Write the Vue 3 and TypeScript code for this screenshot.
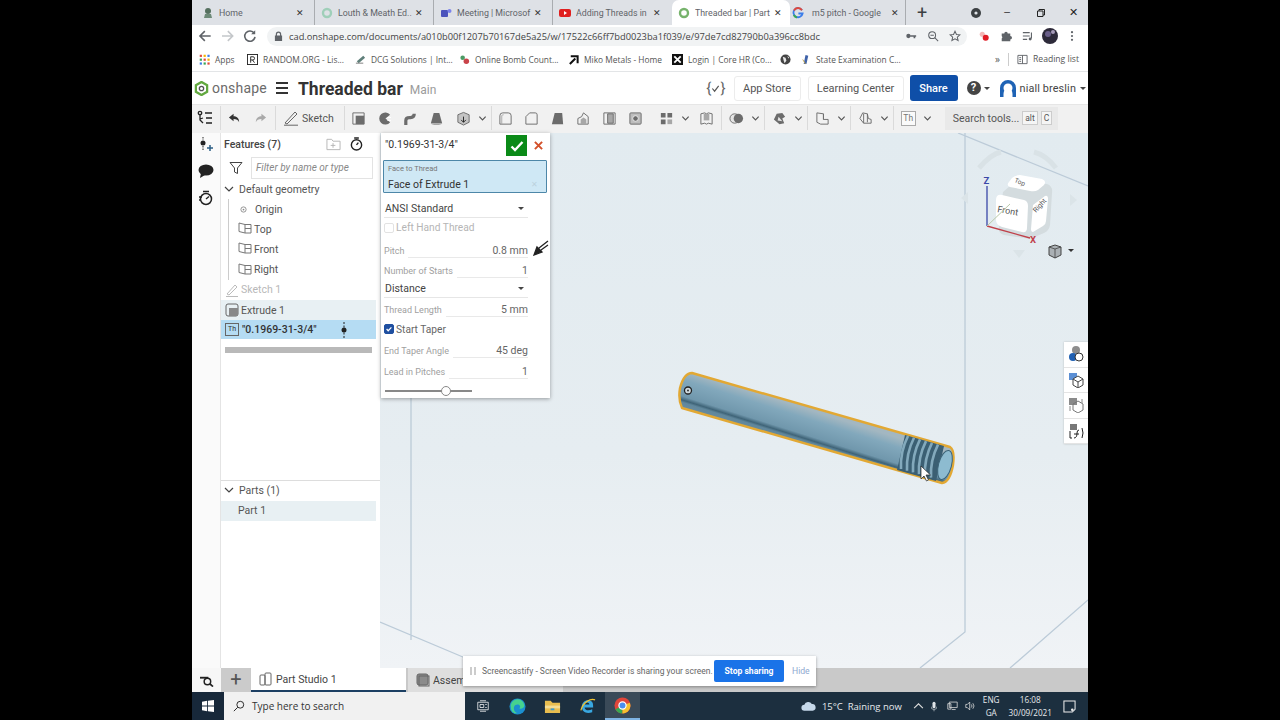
<template>
  <div class="screen">
    <div class="frame">
      <!-- chrome tabs -->
      <div class="tabstrip">
        <div v-for="t in tabs" :key="t.title" class="tab" :class="{ active: t.active, last: t.kind === 'g' }">
          <svg class="fav" viewBox="0 0 12 12">
            <circle v-if="t.kind === 'ring'" cx="6" cy="6" r="4" fill="none" :stroke="t.color" stroke-width="2.4" />
            <rect v-else-if="t.kind === 'yt'" x="0" y="2" width="12" height="8" rx="2" fill="#e01f1f" />
            <path v-if="t.kind === 'yt'" d="M5 4l3 2-3 2z" fill="#fff" />
            <template v-if="t.kind === 'home'">
              <circle cx="6" cy="4" r="3" fill="#55705f" />
              <path d="M3 7h6l1 4H2z" fill="#6d8a78" />
            </template>
            <template v-if="t.kind === 'teams'">
              <rect x="1" y="3" width="7" height="7" rx="1" fill="#4b53bc" />
              <circle cx="9.5" cy="4" r="2" fill="#7b83eb" />
            </template>
            <template v-if="t.kind === 'g'">
              <path d="M10 3.2A4.6 4.6 0 1 0 10.6 6.5H6.4" fill="none" stroke="#3b7dea" stroke-width="1.8" />
              <path d="M2 3.5A4.6 4.6 0 0 1 10 3.2" fill="none" stroke="#e0483c" stroke-width="1.8" />
              <path d="M1.7 8A4.6 4.6 0 0 0 5 10.5" fill="none" stroke="#3aa757" stroke-width="1.8" />
            </template>
          </svg>
          <span class="tab-title">{{ t.title }}</span>
          <span class="tab-x">✕</span>
        </div>
        <span class="tab-plus">+</span>
        <span class="win-area">
          <svg class="win-dot" viewBox="0 0 12 12"><circle cx="6" cy="6" r="5" fill="#3c4043" /><circle cx="6" cy="6" r="1.6" fill="#dee1e6" /></svg>
          <span class="win-btn">—</span>
          <svg class="win-res" viewBox="0 0 10 10"><path d="M1.500 3h5.500v5.500H1.500zM3 3V1.500h5.500V7H7" fill="none" stroke="#222" /></svg>
          <span class="win-close">✕</span>
        </span>
      </div>

      <!-- address bar -->
      <div class="addressbar">
        <svg class="nav" viewBox="0 0 14 14"><path d="M13 7H2M7 2L2 7l5 5" fill="none" stroke="#5f6368" stroke-width="1.6" /></svg>
        <svg class="nav" viewBox="0 0 14 14"><path d="M1 7h11M7 2l5 5-5 5" fill="none" stroke="#c4c7ca" stroke-width="1.600" /></svg>
        <svg class="nav" viewBox="0 0 14 14"><path d="M11.500 4.200A5.300 5.300 0 1 0 12.300 8" fill="none" stroke="#5f6368" stroke-width="1.600" /><path d="M12.500 1v4.200H8.300z" fill="#5f6368" /></svg>
        <div class="omnibox">
          <svg class="lock" viewBox="0 0 10 12"><path d="M2 5V3.500a3 3 0 0 1 6 0V5h1v6H1V5zm1.300 0h3.400V3.500a1.700 1.700 0 0 0-3.400 0z" fill="#5f6368" /></svg>
          <span class="url">cad.onshape.com/documents/a010b00f1207b70167de5a25/w/17522c66ff7bd0023ba1f039/e/97de7cd82790b0a396cc8bdc</span>
          <svg class="omni-ic" viewBox="0 0 14 14"><circle cx="4" cy="7" r="2.500" fill="#5f6368" /><path d="M6 6h7v2h-1v1.500h-2V8H6z" fill="#5f6368" /></svg>
          <svg class="omni-ic" viewBox="0 0 14 14"><circle cx="6" cy="6" r="4" fill="none" stroke="#5f6368" stroke-width="1.200" /><path d="M9 9l4 4M4 6h4" stroke="#5f6368" stroke-width="1.200" /></svg>
          <svg class="omni-ic" viewBox="0 0 14 14"><path d="M7 1.500l1.700 3.700 4 .4-3 2.700.9 4L7 10.300l-3.600 2 .9-4-3-2.700 4-.4z" fill="none" stroke="#5f6368" stroke-width="1.200" /></svg>
        </div>
        <div class="ext-icons">
          <svg class="ext" viewBox="0 0 14 14"><circle cx="5" cy="5" r="3" fill="#f3b6b6" /><circle cx="9" cy="9" r="3.500" fill="#e01b24" /></svg>
          <svg class="ext" viewBox="0 0 14 14"><path d="M2 4h3a2 2 0 0 1 4 0h3v3a2 2 0 0 1 0 4v2H2v-3a2 2 0 0 0 0-3z" fill="#5f6368" /></svg>
          <svg class="ext media" viewBox="0 0 14 14"><path d="M1 3h8M1 7h8M1 11h5" stroke="#5f6368" stroke-width="1.300" /><path d="M11 3v7" stroke="#5f6368" stroke-width="1.300" /><circle cx="9.500" cy="10.500" r="1.700" fill="#5f6368" /></svg>
          <svg class="ext big" viewBox="0 0 16 16"><circle cx="8" cy="8" r="8" fill="#2d2a3a" /><circle cx="6" cy="6" r="3" fill="#6a5f8a" /><circle cx="11" cy="4" r="2" fill="#a59ab8" /></svg>
          <svg class="ext" viewBox="0 0 14 14"><circle cx="7" cy="2.500" r="1.300" fill="#5f6368" /><circle cx="7" cy="7" r="1.300" fill="#5f6368" /><circle cx="7" cy="11.500" r="1.300" fill="#5f6368" /></svg>
        </div>
      </div>

      <!-- bookmarks -->
      <div class="bookmarks">
        <div v-for="b in bookmarks" :key="b.icon" class="bm" :style="{ width: b.width + 'px' }">
          <svg class="bm-ic" viewBox="0 0 12 12">
            <template v-if="b.icon === 'apps'">
              <rect v-for="c in appDots" :key="c.x + '-' + c.y" :x="c.x" :y="c.y" width="2.400" height="2.400" :fill="c.fill" />
            </template>
            <template v-if="b.icon === 'r'">
              <rect x=".5" y=".5" width="11" height="11" fill="#fff" stroke="#222" />
              <path d="M4 9.500V3h2.500a1.700 1.700 0 0 1 0 3.500H4M6 6.500l2.200 3" fill="none" stroke="#222" />
            </template>
            <template v-if="b.icon === 'dcg'">
              <path d="M2 8l7-6 2 2-7 6z" fill="#5f7f7a" /><path d="M1 10h8" stroke="#777" />
            </template>
            <template v-if="b.icon === 'bomb'">
              <circle cx="4" cy="4" r="2.500" fill="#4c9a64" /><circle cx="8" cy="8" r="3" fill="#c9434a" />
            </template>
            <path v-if="b.icon === 'arrow'" d="M2 11L8 5M3 2.500h7.500V10" fill="none" stroke="#111" stroke-width="2.200" />
            <template v-if="b.icon === 'x'">
              <rect width="12" height="12" fill="#111" /><path d="M2.500 2.500l7 7M9.500 2.500l-7 7" stroke="#fff" stroke-width="2" />
            </template>
            <template v-if="b.icon === 'state'">
              <path d="M6 1l3 1-2 9H4z" fill="#3f62a8" /><path d="M3 6l3 5" stroke="#c2a44a" />
            </template>
            <template v-if="b.icon === 'globe'">
              <circle cx="6" cy="6" r="5.500" fill="#444" /><path d="M3 3l3 1 1 3-2 3-1-3zM8 2l2 2-1 1z" fill="#e8e8e8" />
            </template>
          </svg>
          <span v-if="b.label">{{ b.label }}</span>
        </div>
        <div class="bm-end">
          <span class="bm-more">»</span>
          <span class="bm-sep"></span>
          <svg class="bm-ic" viewBox="0 0 12 12"><path d="M1 1.500h10v9H1zM6 1.500v9M2.500 4h2M2.500 6h2M2.500 8h2" fill="none" stroke="#5f6368" /></svg>
          <span>Reading list</span>
        </div>
      </div>

      <!-- onshape header -->
      <header class="appbar">
        <svg class="logo" viewBox="0 0 16 16">
          <path d="M8 1l6 3.500v7L8 15l-6-3.500v-7z" fill="none" stroke="#62a83f" stroke-width="2.400" />
          <circle cx="8" cy="8" r="2.300" fill="none" stroke="#555" stroke-width="1.400" />
        </svg>
        <span class="brand">onshape</span>
        <span class="burger"><i></i><i></i><i></i></span>
        <span class="doc-title">Threaded bar</span>
        <span class="doc-branch">Main</span>
        <span class="appbar-space"></span>
        <span class="braces">{<svg viewBox="0 0 10 10"><path d="M1.500 5l2.500 3 4.500-6" fill="none" stroke="#555" stroke-width="1.300" /></svg>}</span>
        <span class="hbtn store">App Store</span>
        <span class="hbtn center">Learning Center</span>
        <span class="share">Share</span>
        <span class="help">?</span>
        <span class="caret dark"></span>
        <svg class="avatar" viewBox="0 0 18 18">
          <path d="M1 18V9a8 8 0 0 1 16 0v9h-3.500v-3a4.500 6 0 0 0-9 0v3z" fill="#1f63b5" />
          <circle cx="9" cy="9" r="4.500" fill="#fff" />
        </svg>
        <span class="user">niall breslin</span>
        <span class="caret dark"></span>
      </header>

      <!-- feature toolbar -->
      <div class="toolbar">
        <svg class="list-ic" viewBox="0 0 16 16">
          <circle cx="3" cy="3" r="1.700" fill="none" stroke="#222" stroke-width="1.300" />
          <path d="M3 5v5l3 3M3 9l3-1M8 3h7M9 8h6M9 13h6" fill="none" stroke="#222" stroke-width="1.300" />
        </svg>
        <span class="tsep"></span>
        <svg class="undo" viewBox="0 0 14 14"><path d="M6 2L1 6l5 4V7.500c3 0 5 1 6 3.500 0-4-2-6.500-6-6.500z" fill="#333" /></svg>
        <svg class="undo" viewBox="0 0 14 14"><path d="M8 2l5 4-5 4V7.500c-3 0-5 1-6 3.500 0-4 2-6.500 6-6.500z" fill="#a9a9a9" /></svg>
        <span class="tsep"></span>
        <svg class="pen" viewBox="0 0 16 16"><path d="M2 13L12 2l2 2L4 14zM1 15.200h14" fill="none" stroke="#666" /></svg>
        <span class="sketch">Sketch</span>
        <span class="tsep"></span>
        <template v-for="(tool, i) in tools" :key="i">
          <span v-if="tool.sep" class="tsep"></span>
          <span v-else class="tool" :class="{ withchev: tool.chev, wide: tool.wide }">
            <span v-if="tool.th" class="th big">Th</span>
            <svg v-else class="tool-ic" viewBox="0 0 16 16">
              <path v-for="(p, j) in tool.paths" :key="j" :d="p.d" :fill="p.fill ?? 'none'" :stroke="p.stroke ?? 'none'" :stroke-width="p.sw ?? 1" />
            </svg>
            <svg v-if="tool.chev" class="chev" viewBox="0 0 10 10"><path d="M1.500 3L5 6.500 8.500 3" fill="none" stroke="#555" stroke-width="1.300" /></svg>
          </span>
        </template>
        <div class="tool-search">
          <span>Search tools...</span>
          <kbd>alt</kbd><kbd>C</kbd>
        </div>
      </div>

      <!-- main area -->
      <div class="workspace">
        <div class="rail">
          <svg class="rail-ic" viewBox="0 0 16 16"><circle cx="5" cy="7" r="2.500" fill="#222" /><path d="M5 1v3M5 10v4" stroke="#222" stroke-dasharray="1.500 1" /><path d="M9 12h6M12 9v6" stroke="#2d5f85" stroke-width="1.500" /></svg>
          <svg class="rail-ic" viewBox="0 0 16 16"><ellipse cx="8" cy="7" rx="7.500" ry="5.500" fill="#222" /><path d="M3 10l-1 5 5-3z" fill="#222" /></svg>
          <svg class="rail-ic" viewBox="0 0 16 16"><circle cx="8" cy="9" r="5.500" fill="none" stroke="#222" stroke-width="1.500" /><path d="M5 1.500h6M8 9l3-2.500M1 7h3M1 10h2" stroke="#222" stroke-width="1.400" /></svg>
        </div>

        <aside class="features">
          <div class="feat-head">
            <span>Features (7)</span>
            <span class="feat-head-ic">
              <svg viewBox="0 0 16 14"><path d="M1 2h5l1.500 2H15v9H1zM5 8.500h5M7.500 6v5" fill="none" stroke="#b5b5b5" /></svg>
              <svg viewBox="0 0 14 15"><circle cx="7" cy="8.500" r="5.500" fill="none" stroke="#222" stroke-width="1.500" /><path d="M4.500 1h5M7 8.500l2-2.500" stroke="#222" stroke-width="1.500" /></svg>
            </span>
          </div>
          <div class="filter-row">
            <svg viewBox="0 0 14 14"><path d="M1 1.500h12L8.500 7v5.500l-3-1.500V7z" fill="none" stroke="#444" /></svg>
            <span class="filter">Filter by name or type</span>
          </div>
          <div class="tree">
            <div class="group-row"><svg class="tw" viewBox="0 0 10 10"><path d="M1 3l4 4 4-4" fill="none" stroke="#444" stroke-width="1.200" /></svg>Default geometry</div>
            <div class="branch">
              <div class="row indent origin"><svg viewBox="0 0 8 8"><circle cx="4" cy="4" r="3" fill="none" stroke="#888" /><circle cx="4" cy="4" r="1" fill="#888" /></svg>Origin</div>
              <div v-for="p in planes" :key="p" class="row indent">
                <svg class="plane" viewBox="0 0 14 14"><path d="M1 1l6 1.500h6V11H7l-6-1.500zM7 2.500V11M7 6.500h6" fill="none" stroke="#777" /></svg>{{ p }}
              </div>
            </div>
            <div class="row feat muted"><svg class="plane" viewBox="0 0 14 14"><path d="M2 11l8-9 2 2-8 8zM1 13.500h12" fill="none" stroke="#bbb" /></svg>Sketch 1</div>
            <div class="row feat tinted"><svg class="plane" viewBox="0 0 14 14"><rect x="1" y="1" width="12" height="12" rx="2" fill="none" stroke="#666" /><rect x="4" y="5" width="9" height="8" fill="#888" /></svg>Extrude 1</div>
            <div class="row feat selected">
              <span class="th">Th</span><b>"0.1969-31-3/4"</b>
              <svg class="rollback" viewBox="0 0 6 16"><circle cx="3" cy="8" r="2.500" fill="#222" /><path d="M3 0v16" stroke="#222" stroke-dasharray="2 1.500" /></svg>
            </div>
            <div class="rollbar"></div>
          </div>
          <div class="parts">
            <div class="group-row"><svg class="tw" viewBox="0 0 10 10"><path d="M1 3l4 4 4-4" fill="none" stroke="#444" stroke-width="1.200" /></svg>Parts (1)</div>
            <div class="part">Part 1</div>
          </div>
        </aside>

        <div class="viewport">
          <svg class="scene" viewBox="380 133 708 535" preserveAspectRatio="none">
            <defs>
              <linearGradient id="barfill" gradientUnits="userSpaceOnUse" x1="692" y1="373" x2="681" y2="408">
                <stop offset="0" stop-color="#a3b7c1" />
                <stop offset=".25" stop-color="#82a8bc" />
                <stop offset=".68" stop-color="#7097ac" />
                <stop offset=".78" stop-color="#3f6478" />
                <stop offset=".84" stop-color="#60879c" />
                <stop offset="1" stop-color="#6a8ca0" />
              </linearGradient>
            </defs>
            <path d="M411 133V640M380 622L470 660M965 133V632L920 668M958 133L1088 186M1088 600L1010 668" fill="none" stroke="#bccbd8" stroke-width="1.300" />
            <path d="M692 373L950 447Q955 450 953 465Q950 482 942 483L682 408Q678 400 680 388Q684 373 692 373z" fill="url(#barfill)" stroke="#e2a833" stroke-width="2.400" stroke-linejoin="round" />
            <path d="M905 435L944 446L936 481L897 470z" fill="#3b5f73" />
            <g fill="none" stroke="#83a9bc" stroke-width="2.600">
              <path v-for="x in threadXs" :key="x" :d="`M${x} ${436 + (x - 908) * 0.287}q-8 16 -7 33`" />
            </g>
            <ellipse cx="945" cy="465" rx="6.500" ry="15" transform="rotate(15 945 465)" fill="#8dbbd0" stroke="#3d6478" />
            <circle cx="688" cy="390.500" r="3.500" fill="#cfdbe0" stroke="#222" stroke-width="1.300" />
            <circle cx="688" cy="390.500" r=".9" fill="#222" />
            <path d="M921 466v13l3-3 2.500 5 2-1-2.500-5h4.500z" fill="#fff" stroke="#222" stroke-width=".7" />

            <!-- view cube -->
            <path d="M979 168q12-14 22-16M1034 152q12 3 22 16" fill="none" stroke="#d9e2e6" stroke-width="5" />
            <path d="M1013 250h12l-6 8zM1070 194l7 6-7 6zM968 192l-7 6 7 6z" fill="#dbe4e8" />
            <path d="M1003 192l14-12 30 4q6 2 5 9l-2 32q-1 6-6 8l-14 6-26-4q-6-2-5-8z" fill="#d4dcdf" />
            <path d="M1012 178q3-3 8-3l22 4q5 2 2 6l-6 5q-3 2-8 1l-20-4q-4-2-1-5z" fill="#fff" />
            <path d="M996 200q0-6 6-5l22 5q4 1 4 6l-1 22q0 5-5 4l-20-5q-6-2-6-7z" fill="#fff" />
            <path d="M1033 205l12-9q3-1 3 3l-2 22q0 3-3 5l-10 6q-2 0-2-3z" fill="#fff" />
            <text class="cube-t" x="997" y="212" font-size="9" transform="rotate(10 997 212)">Front</text>
            <text class="cube-t" x="1014" y="182" font-size="6.500" transform="rotate(22 1014 182)">Top</text>
            <text class="cube-t" x="1036" y="213" font-size="7" transform="rotate(-48 1036 213)">Right</text>
            <path d="M987 186V226" stroke="#3a47a8" stroke-width="1.300" />
            <path d="M987 226L1030 238" stroke="#c0404a" stroke-width="1.300" />
            <path d="M987 226L1010 204" stroke="#b9c9a8" stroke-width="1" />
            <text class="axis z" x="983.500" y="184" font-size="9.500">Z</text>
            <text class="axis x" x="1030" y="243" font-size="9.500">X</text>
          </svg>

          <!-- thread dialog -->
          <div class="dialog">
            <div class="dlg-title">
              <span class="dlg-name">"0.1969-31-3/4"</span>
              <span class="ok"><svg viewBox="0 0 14 12"><path d="M1.500 6.500L5 10l7.500-8" fill="none" stroke="#fff" stroke-width="2.400" /></svg></span>
              <span class="cancel"><svg viewBox="0 0 10 10"><path d="M1 1l8 8M9 1l-8 8" fill="none" stroke="#d3502a" stroke-width="2.200" /></svg></span>
            </div>
            <div class="facebox">
              <small>Face to Thread</small>
              <span>Face of Extrude 1</span>
              <em>✕</em>
            </div>
            <div class="dlg-rows">
              <div class="drop">ANSI Standard<i class="caret dark"></i></div>
              <label class="chk off"><span class="box"></span>Left Hand Thread</label>
              <div class="num pitch"><span>Pitch</span><b>0.8 mm</b><svg class="wand" viewBox="0 0 16 16"><path d="M1 15L4 7l5 5zM6 8l9-7M8 10l7-5" fill="#222" stroke="#222" stroke-width="1.300" /></svg></div>
              <div class="num"><span>Number of Starts</span><b>1</b></div>
              <div class="drop">Distance<i class="caret dark"></i></div>
              <div class="num"><span>Thread Length</span><b>5 mm</b></div>
              <label class="chk on"><span class="box"><svg viewBox="0 0 10 10"><path d="M2 5l2 2.200L8 3" fill="none" stroke="#fff" stroke-width="1.500" /></svg></span>Start Taper</label>
              <div class="num"><span>End Taper Angle</span><b>45 deg</b></div>
              <div class="num"><span>Lead in Pitches</span><b>1</b></div>
              <div class="slider"><i></i></div>
            </div>
          </div>

          <svg class="cube-menu" viewBox="0 0 30 16">
            <path d="M3 4l6-2 6 2v8l-6 3-6-3z" fill="#aab0b4" stroke="#444" />
            <path d="M3 4l6 2 6-2M9 6v9" fill="none" stroke="#444" stroke-width=".8" />
            <path d="M22 6h6l-3 3z" fill="#333" />
          </svg>

          <div class="palette">
            <span v-for="(q, i) in paletteIcons" :key="i" class="pal-btn">
              <svg viewBox="0 0 16 16">
                <path v-for="(p, j) in q" :key="j" :d="p.d" :fill="p.fill ?? 'none'" :stroke="p.stroke ?? 'none'" />
              </svg>
            </span>
          </div>

          <div class="toast">
            <span class="pause"><i></i><i></i></span>
            <span class="toast-text">Screencastify - Screen Video Recorder is sharing your screen.</span>
            <span class="stop">Stop sharing</span>
            <span class="hide">Hide</span>
          </div>
        </div>
      </div>

      <!-- document tabs -->
      <div class="doctabs">
        <span class="search-doc"><svg viewBox="0 0 16 14"><path d="M1 3h9v2H1z" fill="#222" /><circle cx="9" cy="8" r="3.500" fill="none" stroke="#222" stroke-width="1.600" /><path d="M11.500 10.500L15 13.500" stroke="#222" stroke-width="1.800" /></svg></span>
        <span class="add-doc">+</span>
        <span class="doc-tab active">
          <svg viewBox="0 0 14 14"><rect x="1" y="3" width="5" height="10" rx="1" fill="none" stroke="#666" /><rect x="6" y="1" width="6" height="12" rx="1" fill="none" stroke="#666" /></svg>
          Part Studio 1
        </span>
        <span class="doc-tab">
          <svg viewBox="0 0 14 14"><rect x="1" y="1" width="11" height="11" rx="2" fill="#8b8b8b" stroke="#666" /><rect x="3" y="3" width="10" height="10" fill="none" stroke="#666" /></svg>
          Assembly 1
        </span>
      </div>

      <!-- windows taskbar -->
      <footer class="taskbar">
        <span class="start">
          <svg viewBox="0 0 14 14"><path d="M0 2l6-1v5.500H0zM7 .8L14 0v6.500H7zM0 7.500h6V13l-6-1zM7 7.500h7V14l-7-1z" fill="#fff" /></svg>
        </span>
        <div class="task-search">
          <svg viewBox="0 0 14 14"><circle cx="8.500" cy="5.500" r="4" fill="none" stroke="#222" stroke-width="1.100" /><path d="M5.500 8.500L1 13" stroke="#222" stroke-width="1.100" /></svg>
          <span>Type here to search</span>
        </div>
        <div class="task-apps">
          <span class="app"><svg viewBox="0 0 16 16"><path d="M1 3h14v10H1zM4 1h8M4 15h8M4 6h5v4H4zM11 6h2M11 10h2" fill="none" stroke="#fff" /></svg></span>
          <span class="app"><svg viewBox="0 0 18 18"><circle cx="9" cy="9" r="8.500" fill="#1b8fd0" /><path d="M2 10a7 7 0 0 1 14-3c1 3-2 5-5 4 2-2 0-4-2-4-3 0-5 3-3 7 1 1 2 2 3 2-4 1-7-2-7-6z" fill="#46d28e" /></svg></span>
          <span class="app"><svg viewBox="0 0 18 16"><path d="M1 2h6l2 2h8v11H1z" fill="#e8bd4f" /><path d="M1 7h16v3H1z" fill="#f4dc93" /><path d="M7 10h4v2H7z" fill="#3f9bc9" /></svg></span>
          <span class="app"><svg viewBox="0 0 18 18"><path d="M15 10H6c0 3 4 4 8 2v3c-6 2-11 0-11-6 0-5 5-8 9-6 3 1 3 4 3 7zM6 7h5c0-3-5-3-5 0z" fill="#39a7e0" /><path d="M2 13C4 5 12 0 17 2" fill="none" stroke="#f0c332" stroke-width="1.300" /></svg></span>
          <span class="app current"><svg viewBox="0 0 18 18"><circle cx="9" cy="9" r="8.500" fill="#e0463a" /><path d="M9 9L1.500 13A8.500 8.500 0 0 0 9 17.500z" fill="#37a852" /><path d="M9 9l7.800-3A8.500 8.500 0 0 1 9 17.500z" fill="#f5c02f" /><circle cx="9" cy="9" r="3.800" fill="#4a8df0" stroke="#fff" stroke-width="1.300" /></svg></span>
        </div>
        <div class="tray">
          <svg class="cloud" viewBox="0 0 18 12"><path d="M4 11a3.500 3.500 0 0 1 0-7 5 5 0 0 1 9-1 4 4 0 0 1 1 8z" fill="#c5d8ea" /></svg>
          <span class="weather">15°C&nbsp; Raining now</span>
          <svg class="tray-ic up" viewBox="0 0 10 6"><path d="M1 5l4-4 4 4" fill="none" stroke="#ddd" /></svg>
          <svg class="tray-ic mic" viewBox="0 0 10 16"><rect x="2.500" y="0" width="5" height="11" rx="2.500" fill="#dfe4e8" /><path d="M0 8a5 5 0 0 0 10 0M5 13v3" fill="none" stroke="#dfe4e8" /></svg>
          <svg class="tray-ic" viewBox="0 0 14 12"><path d="M3 1h10v7H3zM1 3h4v7H1zM6 10.500h5" fill="none" stroke="#ddd" /></svg>
          <svg class="tray-ic" viewBox="0 0 14 12"><path d="M1 4h2l3-3v10L3 8H1zM8 4q2 2 0 4M10 2.500q3 3.500 0 7" fill="none" stroke="#ddd" /></svg>
          <span class="lang">ENG<br />GA</span>
          <span class="clock">16:08<br />30/09/2021</span>
          <svg class="notif" viewBox="0 0 14 14"><path d="M1 1h12v9l-3 3H1z" fill="none" stroke="#eee" stroke-width="1.100" /><circle cx="10" cy="10.500" r="1.400" fill="#eee" /></svg>
        </div>
      </footer>
    </div>
  </div>
</template>

<script setup lang="ts">
interface Tab {
  title: string
  kind: string
  color?: string
  active?: boolean
}
interface Bookmark {
  label: string
  icon: string
  width: number
}
interface Shape {
  d: string
  fill?: string
  stroke?: string
  sw?: number
}
interface Tool {
  sep?: boolean
  chev?: boolean
  wide?: boolean
  th?: boolean
  paths?: Shape[]
}

const tabs: Tab[] = [
  { title: 'Home', kind: 'home' },
  { title: 'Louth & Meath Ed..', kind: 'ring', color: '#9fcfb9' },
  { title: 'Meeting | Microsof', kind: 'teams' },
  { title: 'Adding Threads in', kind: 'yt' },
  { title: 'Threaded bar | Part', kind: 'ring', color: '#77b36c', active: true },
  { title: 'm5 pitch - Google', kind: 'g' },
]

const bookmarks: Bookmark[] = [
  { label: 'Apps', icon: 'apps', width: 48 },
  { label: 'RANDOM.ORG - Lis...', icon: 'r', width: 108 },
  { label: 'DCG Solutions | Int...', icon: 'dcg', width: 104 },
  { label: 'Online Bomb Count...', icon: 'bomb', width: 109 },
  { label: 'Miko Metals - Home', icon: 'arrow', width: 104 },
  { label: 'Login | Core HR (Co...', icon: 'x', width: 108 },
  { label: '', icon: 'globe', width: 20 },
  { label: 'State Examination C...', icon: 'state', width: 110 },
]

const appColors = ['#e0483c', '#f5b400', '#3b7dea', '#3aa757', '#e0483c', '#f5b400', '#3b7dea', '#3aa757', '#e0483c']
const appDots = appColors.map((fill, i) => ({
  fill,
  x: (i % 3) * 4.2 + 0.8,
  y: Math.floor(i / 3) * 4.2 + 0.8,
}))

const planes = ['Top', 'Front', 'Right']
const threadXs = [908, 914, 920, 926, 932, 938]

const grey = '#6c6c6c'
const lite = '#a7a7a7'
const tools: Tool[] = [
  { paths: [{ d: 'M2 2h12v12H2z', stroke: grey }, { d: 'M5 5h9v9H5z', fill: grey }] },
  { paths: [{ d: 'M14 4a6.500 6.500 0 1 0 0 8L9 8z', fill: grey }, { d: 'M11 7h4M11 10h4', stroke: '#fff' }] },
  { paths: [{ d: 'M3 15V10q0-3 4-3h1q4 0 4-4', stroke: grey, sw: 3.4 }] },
  { paths: [{ d: 'M5 2h6l3 11H2z', fill: grey }, { d: 'M2 13a6 2 0 0 0 12 0', fill: lite }] },
  { chev: true, paths: [{ d: 'M2 4l6-2.500L14 4v8l-6 3-6-3z', fill: '#c4c4c4', stroke: grey }, { d: 'M8 6v6M5.500 9.500L8 12l2.500-2.500', stroke: '#222' }] },
  { sep: true },
  { paths: [{ d: 'M2 14V5q0-3 3-3h6q3 0 3 3v9z', stroke: grey }, { d: 'M4 14V5q0-1 2-1', stroke: lite }] },
  { paths: [{ d: 'M2 14V6l4-4h6q2 0 2 2v10z', stroke: grey }] },
  { paths: [{ d: 'M2 14L5 2h8l1 12z', fill: grey }] },
  { paths: [{ d: 'M2 14V8l4-2 2-4 5 4v8z', stroke: grey }, { d: 'M5 14V9l3-2 3 2v5z', fill: lite }] },
  { paths: [{ d: 'M2 2h12v12H2z', stroke: grey }, { d: 'M6 3h6v10H6z', fill: lite, stroke: grey }] },
  { paths: [{ d: 'M2 3q0-1 1-1h10q1 0 1 1v10q0 1-1 1H3q-1 0-1-1z', fill: '#bdbdbd', stroke: grey }, { d: 'M11 8a3 3 0 1 1-6 0 3 3 0 0 1 6 0z', fill: grey, stroke: '#eee' }] },
  { chev: true, wide: true, paths: [{ d: 'M2 2h5v5H2zM9 2h5v5H9zM2 9h5v5H2z', fill: grey }, { d: 'M9 9h5v5H9z', fill: lite }] },
  { paths: [{ d: 'M2 3l4-1 2 1 2-1 4 1v11l-4-1-2 1-2-1-4 1z', stroke: grey }, { d: 'M5 3h6v7H5z', fill: lite }] },
  { sep: true },
  { chev: true, paths: [{ d: 'M11 8a5 5 0 1 1-10 0 5 5 0 0 1 10 0z', fill: '#e4e4e4', stroke: grey }, { d: 'M15 8a5 5 0 1 1-10 0 5 5 0 0 1 10 0z', fill: grey }] },
  { sep: true },
  { chev: true, paths: [{ d: 'M2 9l3-6 6-1 3 4-3 2 2 5-5 1z', fill: grey }, { d: 'M7 6l4 5-5-1z', fill: '#e5e5e5' }] },
  { sep: true },
  { chev: true, paths: [{ d: 'M2 2l7 1v6h5v5H6L2 12z', stroke: grey }, { d: 'M9 3v6', stroke: grey }] },
  { sep: true },
  { chev: true, paths: [{ d: 'M2 8l3-6 5 1 1 5 3 1v4H6z', stroke: grey }, { d: 'M6 3v10M10 3v9', stroke: grey }] },
  { sep: true },
  { chev: true, th: true },
]

const paletteIcons: Shape[][] = [
  [
    { d: 'M4 4a4 4 0 0 1 8 0 4 4 0 0 1-8 0z', fill: '#8d8d8d' },
    { d: 'M1 11a4 4 0 0 1 8 0 4 4 0 0 1-8 0z', fill: '#1f5fb2' },
    { d: 'M7 11a4 4 0 0 1 8 0 4 4 0 0 1-8 0z', fill: '#fff', stroke: '#333' },
  ],
  [
    { d: 'M1 1h8v7H1z', fill: '#5b8fd4' },
    { d: 'M5 7l5-3 5 3v6l-5 3-5-3z', fill: '#fff', stroke: '#444' },
    { d: 'M5 7l5 3 5-3M10 10v6', stroke: '#444' },
  ],
  [
    { d: 'M1 1h8v7H1z', fill: '#8a8a8a' },
    { d: 'M5 7l5-3 5 3v6l-5 3-5-3z', stroke: '#777' },
    { d: 'M2 9v5M14 2v4', stroke: '#888' },
  ],
  [
    { d: 'M2 1h7v6H2z', fill: '#777' },
    { d: 'M2 8v7h2M14 5q2 5 0 10', stroke: '#222' },
    { d: 'M6 15q3 0 3-5 0-3 2-3M6 11h5', stroke: '#222' },
  ],
]
</script>

<style>
html,
body {
  margin: 0;
  background: #000;
}
</style>

<style scoped>
.screen {
  width: 1280px;
  height: 720px;
  background: #000;
  display: flex;
  justify-content: center;
  overflow: hidden;
}

.frame {
  width: 896px;
  height: 720px;
  display: flex;
  flex-direction: column;
  background: #fff;
  font-family: Roboto, "Liberation Sans", sans-serif;
  color: #333;
}

/* chrome */
.tabstrip {
  height: 25px;
  background: #dee1e6;
  display: flex;
  align-items: center;
  padding-left: 4px;
  font-family: Roboto, "Liberation Sans", sans-serif;
  font-size: 8.8px;
  color: #5f6368;
  flex: none;
}

.tab {
  width: 119px;
  height: 25px;
  box-sizing: border-box;
  display: flex;
  align-items: center;
  padding: 0 6px 0 6px;
  border-right: 1px solid #a9acb0;
  flex: none;
}

.tab:nth-child(4),
.tab.active {
  border-right-color: transparent;
}

.tab.active {
  background: #fff;
  border-radius: 7px 7px 0 0;
  width: 118px;
  padding-right: 4px;
  margin-right: 1px;
  border-right: 0;
}

.tab.last {
  width: 115px;
  padding: 0 2px 0 1px;
}

.fav {
  width: 12px;
  height: 12px;
  margin-right: 5px;
  flex: none;
}

.tab.last .fav {
  margin-right: 8px;
}

.tab-title {
  flex: 1;
  min-width: 0;
  white-space: nowrap;
  overflow: hidden;
}

.tab-x {
  font-size: 9px;
  color: #333;
  margin: 0 4px 0 2px;
}

.tab-plus {
  font-size: 18px;
  line-height: 20px;
  color: #3c4043;
  margin-left: 11px;
}

.win-area {
  margin-left: auto;
  display: flex;
  align-items: center;
  padding-right: 10px;
  color: #222;
}

.win-dot {
  width: 12px;
  height: 12px;
  margin-right: 15px;
}

.win-btn {
  font-size: 9px;
  width: 20px;
  text-align: center;
  margin-right: 19px;
}

.win-res {
  width: 10px;
  height: 10px;
  margin-right: 23px;
}

.win-close {
  font-size: 11px;
}

.addressbar {
  height: 22px;
  flex: none;
  background: #fff;
  display: flex;
  align-items: center;
  padding-left: 6px;
}

.nav {
  width: 14px;
  height: 14px;
  margin-right: 9px;
}

.omnibox {
  width: 700px;
  height: 19px;
  margin-left: 1px;
  border-radius: 10px;
  background: #f1f3f4;
  display: flex;
  align-items: center;
  padding-left: 7px;
  box-sizing: border-box;
  flex: none;
}

.lock {
  width: 9px;
  height: 11px;
  margin-right: 6px;
  flex: none;
}

.url {
  font-family: "Open Sans", "Liberation Sans", sans-serif;
  font-size: 9.300px;
  color: #444;
  width: 606px;
  white-space: nowrap;
  overflow: hidden;
}

.omni-ic {
  width: 12px;
  height: 12px;
  margin-left: 10px;
  flex: none;
}

.ext-icons {
  display: flex;
  align-items: center;
  margin-left: 11px;
}

.ext {
  width: 12px;
  height: 12px;
  margin-right: 10px;
}

.ext.media {
  margin-right: 8px;
}

.ext.big {
  width: 16px;
  height: 16px;
  margin-right: 8px;
}

.bookmarks {
  height: 25px;
  flex: none;
  background: #fff;
  border-bottom: 1px solid #e3e5e7;
  box-sizing: border-box;
  display: flex;
  align-items: center;
  padding-left: 7px;
  font-family: "Open Sans", "Liberation Sans", sans-serif;
  font-size: 8.400px;
  color: #555;
}

.bm {
  display: flex;
  align-items: center;
  white-space: nowrap;
  flex: none;
}

.bm-ic {
  width: 11px;
  height: 11px;
  margin-right: 5px;
  flex: none;
}

.bm-end {
  margin-left: auto;
  display: flex;
  align-items: center;
  padding-right: 9px;
  font-size: 8.600px;
}

.bm-more {
  margin-right: 8px;
  font-size: 10px;
}

.bm-sep {
  width: 1px;
  height: 13px;
  background: #ccc;
  margin-right: 8px;
}

/* onshape header */
.appbar {
  height: 32px;
  flex: none;
  display: flex;
  align-items: center;
  padding: 0 2px;
  background: #fff;
}

.logo {
  width: 15px;
  height: 15px;
  margin-right: 3px;
}

.brand {
  font-size: 14px;
  color: #6b6b6b;
  letter-spacing: .2px;
  width: 64px;
}

.burger {
  width: 12px;
  display: flex;
  flex-direction: column;
  gap: 3px;
  margin-right: 10px;
}

.burger i {
  height: 2px;
  background: #333;
}

.doc-title {
  font-size: 17.500px;
  font-weight: 700;
  color: #333;
  margin: 1px 7px 0 0;
}

.doc-branch {
  font-size: 12px;
  color: #9b9b9b;
  margin-top: 3px;
}

.appbar-space {
  flex: 1;
}

.braces {
  font-size: 15px;
  color: #666;
  display: flex;
  align-items: center;
  margin-right: 8px;
}

.braces svg {
  width: 9px;
  height: 9px;
}

.hbtn {
  height: 25px;
  box-sizing: border-box;
  border: 1px solid #ececec;
  border-radius: 3px;
  display: flex;
  align-items: center;
  justify-content: center;
  font-size: 11px;
  color: #555;
}

.store {
  width: 67px;
  margin-right: 7px;
}

.center {
  width: 96px;
  margin-right: 6px;
}

.share {
  width: 48px;
  height: 26px;
  background: #0f4fa8;
  color: #fff;
  border-radius: 3px;
  font-size: 11px;
  font-weight: 500;
  display: flex;
  align-items: center;
  justify-content: center;
  margin-right: 9px;
}

.help {
  width: 14px;
  height: 14px;
  border-radius: 50%;
  background: #444;
  color: #fff;
  font-size: 11px;
  font-weight: 700;
  text-align: center;
  line-height: 14px;
  margin-right: 3px;
}

.caret {
  display: inline-block;
  width: 0;
  height: 0;
  border: 3px solid transparent;
  border-bottom: 0;
  border-top: 3px solid #444;
}

.appbar > .caret {
  margin-right: 9px;
}

.appbar > .caret:last-child {
  margin: 0 0 0 4px;
}

.avatar {
  width: 18px;
  height: 18px;
  margin-right: 3px;
}

.user {
  font-size: 10.800px;
  color: #444;
  letter-spacing: .15px;
}

/* toolbar */
.toolbar {
  height: 29px;
  flex: none;
  background: #f1f1f1;
  border-top: 1px solid #e6e6e6;
  box-sizing: border-box;
  display: flex;
  align-items: center;
  padding: 0 0 2px 5px;
}

.list-ic {
  width: 16px;
  height: 16px;
  margin-right: 6px;
}

.tsep {
  width: 1px;
  height: 24px;
  margin: 0 1px;
  background: #dadada;
  flex: none;
}

.undo {
  width: 13px;
  height: 13px;
  margin-left: 6px;
  margin-right: 6px;
}

.undo + .undo {
  margin-left: 7px;
  margin-right: 7px;
}

.pen {
  width: 16px;
  height: 16px;
  margin: 0 3px 0 6px;
}

.sketch {
  font-size: 10.500px;
  color: #555;
  margin-right: 9px;
}

.tool {
  width: 26px;
  flex: none;
  display: flex;
  align-items: center;
  justify-content: center;
}

.tool.withchev {
  width: 40px;
  justify-content: flex-start;
  padding-left: 6px;
  box-sizing: border-box;
}

.tool.wide {
  width: 45px;
  padding-left: 10px;
}

.tool-ic {
  width: 15px;
  height: 15px;
  flex: none;
}

.chev {
  width: 9px;
  height: 9px;
  margin-left: 7.500px;
  flex: none;
}

.tool-search {
  margin-left: 10px;
  width: 113px;
  height: 23px;
  background: #e9e9e9;
  display: flex;
  align-items: center;
  padding-left: 8px;
  box-sizing: border-box;
  font-size: 10.500px;
  color: #555;
}

.tool-search kbd {
  font-family: inherit;
  font-size: 8.500px;
  border: 1px solid #ccc;
  background: #f5f5f5;
  padding: 0 2px;
  margin-left: 3px;
  line-height: 12px;
}

/* workspace */
.workspace {
  flex: 1;
  display: flex;
  min-height: 0;
  background: #e6edf1;
}

.rail {
  width: 28px;
  flex: none;
  background: #fafafa;
  display: flex;
  flex-direction: column;
  align-items: center;
  padding-top: 3px;
  gap: 11px;
}

.rail-ic {
  width: 16px;
  height: 16px;
}

.features {
  width: 160px;
  flex: none;
  background: #fff;
  border-left: 1px solid #e4e4e4;
  box-sizing: border-box;
  display: flex;
  flex-direction: column;
  font-size: 10.500px;
  color: #555;
}

.feat-head {
  height: 22px;
  display: flex;
  align-items: center;
  padding-left: 3px;
  font-size: 10.500px;
  font-weight: 500;
  color: #444;
}

.feat-head-ic {
  margin-left: auto;
  display: flex;
  align-items: center;
  padding-right: 16px;
  gap: 8px;
}

.feat-head-ic svg {
  width: 15px;
  height: 14px;
}

.filter-row {
  height: 24px;
  margin-top: 1px;
  display: flex;
  align-items: center;
  padding-left: 8px;
}

.filter-row svg {
  width: 14px;
  height: 14px;
  margin-right: 8px;
}

.filter {
  width: 122px;
  height: 22px;
  box-sizing: border-box;
  border: 1px solid #e3e3e3;
  line-height: 20px;
  padding-left: 4px;
  font-style: italic;
  color: #888;
  font-size: 10px;
  white-space: nowrap;
}

.tree {
  flex: 1;
}

.group-row {
  height: 18px;
  display: flex;
  align-items: center;
  padding-left: 3px;
}

.tw {
  width: 10px;
  height: 10px;
  margin-right: 5px;
}

.branch {
  margin: 1px 0 0 7px;
  border-left: 1px solid #ccc;
}

.row {
  height: 20.200px;
  display: flex;
  align-items: center;
  white-space: nowrap;
}

.indent {
  padding-left: 9px;
}

.origin {
  padding-left: 11px;
}

.origin svg {
  width: 7px;
  height: 7px;
  margin-right: 8px;
}

.plane {
  width: 14px;
  height: 14px;
  margin-right: 2px;
  flex: none;
}

.feat {
  padding-left: 4px;
  margin-right: 4px;
}

.muted {
  color: #b8b8b8;
}

.tinted {
  background: #e8f0f3;
}

.selected {
  background: #b5dcf3;
  height: 19px;
  color: #333;
}

.selected b {
  font-weight: 500;
}

.th {
  width: 12px;
  height: 11px;
  border: 1px solid #666;
  font-size: 7px;
  line-height: 11px;
  text-align: center;
  margin-right: 3px;
  flex: none;
}

.th.big {
  width: 13px;
  height: 13px;
  line-height: 13px;
  font-size: 8.500px;
  border-color: #aaa;
  background: #fafafa;
  color: #777;
  margin-right: 0;
}

.rollback {
  width: 6px;
  height: 16px;
  margin-left: 24px;
}

.rollbar {
  height: 6px;
  margin: 8px 8px 0 4px;
  background: #b9b9b9;
}

.parts {
  height: 188px;
  flex: none;
  border-top: 1px solid #ddd;
  box-sizing: border-box;
}

.part {
  height: 20px;
  line-height: 20px;
  margin: 2px 4px 0 0;
  padding-left: 17px;
  background: #e8f0f3;
}

/* viewport */
.viewport {
  flex: 1;
  position: relative;
  min-width: 0;
  background: linear-gradient(180deg, #e2ebf0 0%, #e6edf1 60%, #f0f3f6 100%);
}

.scene {
  position: absolute;
  inset: 0;
  width: 100%;
  height: 100%;
}

.cube-t {
  font-family: Roboto, "Liberation Sans", sans-serif;
  fill: #555;
}

.axis {
  font-family: Roboto, "Liberation Sans", sans-serif;
  font-weight: 700;
}

.axis.z {
  fill: #3a47a8;
}

.axis.x {
  fill: #c0404a;
}

.dialog {
  position: absolute;
  left: 1px;
  top: 0;
  width: 169px;
  height: 265px;
  background: #fff;
  box-shadow: 0 1px 4px rgba(0, 0, 0, .35);
  display: flex;
  flex-direction: column;
  font-size: 10.500px;
  color: #444;
}

.dlg-title {
  height: 24px;
  display: flex;
  align-items: center;
  padding-left: 4px;
  flex: none;
}

.dlg-name {
  flex: 1;
  font-size: 10.500px;
  color: #333;
  margin-bottom: 2px;
}

.ok {
  width: 21px;
  height: 21px;
  margin-top: 1px;
  background: #0a8a17;
  display: flex;
  align-items: center;
  justify-content: center;
}

.ok svg {
  width: 14px;
  height: 12px;
}

.cancel {
  width: 23px;
  display: flex;
  justify-content: center;
}

.cancel svg {
  width: 9px;
  height: 9px;
}

.facebox {
  margin: 3px 3px 0 2px;
  height: 33px;
  box-sizing: border-box;
  background: #cfe8f5;
  border: 1px solid #4d87a8;
  border-radius: 1px;
  padding: 3px 4px;
  display: flex;
  flex-direction: column;
  position: relative;
  flex: none;
}

.facebox small {
  font-size: 7.500px;
  line-height: 10px;
  color: #777;
}

.facebox span {
  font-size: 10.500px;
  line-height: 15px;
  margin-top: 3px;
  color: #333;
}

.facebox em {
  position: absolute;
  right: 8px;
  bottom: 3px;
  font-size: 8px;
  font-style: normal;
  color: #bcd2dd;
}

.dlg-rows {
  padding: 5px 0 0 3px;
  width: 147px;
  box-sizing: border-box;
  flex: 1;
  display: grid;
  grid-template-rows: 20px 19px 21px 20px 20px 19px 23px 18px 21px 24px;
}

.drop {
  border-bottom: 1px solid #e6e6e6;
  display: flex;
  align-items: center;
  justify-content: space-between;
  padding: 1px 4px 0 1px;
  font-size: 10.500px;
  color: #444;
}

.chk {
  display: flex;
  align-items: center;
  font-size: 10.200px;
  color: #b5b5b5;
}

.chk.on {
  color: #666;
  padding-top: 1px;
}

.box {
  width: 10px;
  height: 10px;
  box-sizing: border-box;
  border: 1px solid #e2e2e2;
  border-radius: 2px;
  margin-right: 2px;
  flex: none;
  display: flex;
}

.on .box {
  background: #1f4fa0;
  border-color: #1f4fa0;
}

.num {
  display: flex;
  align-items: flex-end;
  justify-content: space-between;
  position: relative;
  border-bottom: 1px solid #e9e9e9;
  padding-bottom: 1px;
  font-size: 9px;
  color: #a0a0a0;
}

.num span {
  background: #fff;
  padding: 0 4px 2px 0;
  margin-bottom: -2px;
}

.num b {
  font-weight: 400;
  font-size: 10.500px;
  color: #666;
  margin-bottom: -1px;
}

.wand {
  position: absolute;
  right: -21px;
  top: 3px;
  width: 16px;
  height: 16px;
}

.slider {
  height: 2px;
  width: 87px;
  margin: 11px 0 0 1px;
  background: #888;
  position: relative;
}

.slider i {
  position: absolute;
  left: 56px;
  top: -4px;
  width: 8px;
  height: 8px;
  border: 1px solid #888;
  border-radius: 50%;
  background: #fff;
}

.cube-menu {
  position: absolute;
  left: 666px;
  top: 110px;
  width: 30px;
  height: 16px;
}

.palette {
  position: absolute;
  right: 0;
  top: 209px;
  width: 24px;
  background: #fff;
  box-shadow: 0 0 2px rgba(0, 0, 0, .2);
  display: flex;
  flex-direction: column;
}

.pal-btn {
  height: 25.500px;
  box-sizing: border-box;
  display: flex;
  align-items: center;
  justify-content: center;
  border-bottom: 1px solid #e4e4e4;
}

.pal-btn svg {
  width: 16px;
  height: 16px;
}

.toast {
  position: absolute;
  left: 83px;
  bottom: -18px;
  width: 353px;
  height: 30px;
  background: #fff;
  box-shadow: 0 1px 3px rgba(0, 0, 0, .35);
  display: flex;
  align-items: center;
  padding-left: 7px;
  box-sizing: border-box;
  z-index: 2;
  font-family: Roboto, "Liberation Sans", sans-serif;
}

.pause {
  display: flex;
  gap: 2px;
  margin-right: 6px;
}

.pause i {
  width: 2px;
  height: 8px;
  background: #ccc;
}

.toast-text {
  font-size: 8.500px;
  color: #666;
  width: 232px;
  white-space: nowrap;
}

.stop {
  width: 70px;
  height: 22px;
  background: #1a73e8;
  color: #fff;
  font-size: 8.600px;
  font-weight: 700;
  border-radius: 2px;
  display: flex;
  align-items: center;
  justify-content: center;
  margin-right: 8px;
}

.hide {
  font-size: 8.600px;
  color: #8ea9d0;
}

/* bottom tabs */
.doctabs {
  height: 24px;
  flex: none;
  background: #c9c9c9;
  display: flex;
  align-items: stretch;
  font-size: 10.500px;
  color: #444;
}

.search-doc {
  width: 29px;
  flex: none;
  background: #f7f7f7;
  display: flex;
  align-items: center;
  justify-content: center;
}

.search-doc svg {
  width: 15px;
  height: 13px;
}

.add-doc {
  width: 30px;
  flex: none;
  background: #cbcbcb;
  text-align: center;
  font-size: 20px;
  line-height: 22px;
  color: #555;
}

.doc-tab {
  display: flex;
  align-items: center;
  padding-left: 8px;
  white-space: nowrap;
  width: 155px;
  box-sizing: border-box;
  flex: none;
  background: #dedede;
  margin-right: 2px;
}

.doc-tab svg {
  width: 14px;
  height: 14px;
  margin-right: 3px;
}

.doc-tab.active {
  background: #fff;
  border-bottom: 2px solid #1c3f63;
}

/* taskbar */
.taskbar {
  height: 28px;
  flex: none;
  background: #1c2f3f;
  display: flex;
  align-items: center;
  font-family: "Open Sans", "Liberation Sans", sans-serif;
  color: #e6e9ec;
}

.start {
  width: 32px;
  height: 28px;
  background: #17283a;
  display: flex;
  align-items: center;
  justify-content: center;
  flex: none;
}

.start svg {
  width: 12px;
  height: 12px;
}

.task-search {
  width: 241px;
  height: 28px;
  background: #f1f1f1;
  color: #333;
  font-size: 10px;
  display: flex;
  align-items: center;
  padding-left: 9px;
  box-sizing: border-box;
  flex: none;
}

.task-search svg {
  width: 12px;
  height: 12px;
  margin-right: 7px;
}

.task-apps {
  display: flex;
}

.app {
  width: 35px;
  height: 28px;
  display: flex;
  align-items: center;
  justify-content: center;
}

.app svg {
  width: 17px;
  height: 17px;
}

.app:first-child svg {
  width: 12px;
  height: 12px;
}

.app.current {
  background: #3a4a58;
  border-bottom: 2px solid #7fb4e4;
  box-sizing: border-box;
}

.tray {
  margin-left: auto;
  display: flex;
  align-items: center;
  padding-right: 12px;
}

.cloud {
  width: 15px;
  height: 11px;
  margin-right: 6px;
}

.weather {
  font-size: 9.500px;
  margin-right: 11px;
}

.tray-ic {
  width: 11px;
  height: 10px;
  margin-right: 7px;
}

.tray-ic.mic {
  width: 6px;
  height: 11px;
  margin-right: 10px;
}

.lang,
.clock {
  font-size: 8.200px;
  line-height: 13px;
  text-align: center;
}

.lang {
  margin-right: 9px;
}

.clock {
  margin-right: 11px;
}

.notif {
  width: 13px;
  height: 13px;
}
</style>
